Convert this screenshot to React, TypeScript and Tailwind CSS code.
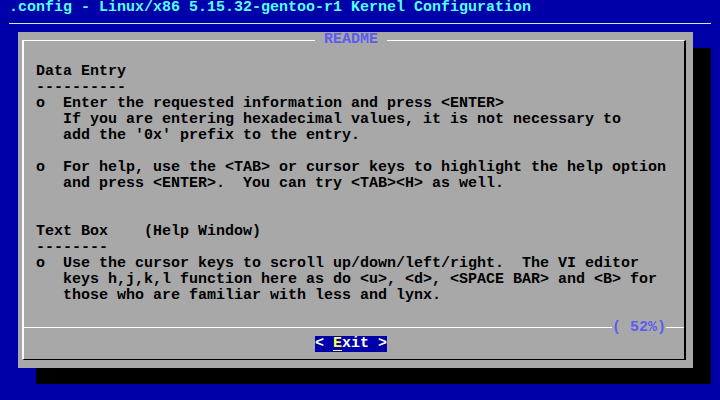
import React from "react";

const readmeLines = [
  "",
  "Data Entry",
  "----------",
  "o  Enter the requested information and press <ENTER>",
  "   If you are entering hexadecimal values, it is not necessary to",
  "   add the '0x' prefix to the entry.",
  "",
  "o  For help, use the <TAB> or cursor keys to highlight the help option",
  "   and press <ENTER>.  You can try <TAB><H> as well.",
  "",
  "",
  "Text Box    (Help Window)",
  "--------",
  "o  Use the cursor keys to scroll up/down/left/right.  The VI editor",
  "   keys h,j,k,l function here as do <u>, <d>, <SPACE BAR> and <B> for",
  "   those who are familiar with less and lynx.",
  "",
];

const App = () => {
  return (
    <div className="w-[720px] h-[400px] overflow-hidden bg-[#0000a8] font-['Liberation_Mono',monospace] text-[15px] leading-4 font-bold">
      {/* backtitle */}
      <div className="h-4 pl-[9px] text-[#55ffff] whitespace-pre">
        .config - Linux/x86 5.15.32-gentoo-r1 Kernel Configuration
      </div>
      <div className="h-4 pt-[7px]">
        <div className="ml-[9px] w-[702px] h-px bg-[#b8f4ff]"></div>
      </div>

      {/* dialog */}
      <div className="ml-[18px] w-[675px] h-[336px] bg-[#a8a8a8] shadow-[18px_16px_0_0_#000] pt-2 pl-1">
        <div className="relative w-[664px] h-[320px] border-t border-l-2 border-r-2 border-b border-t-white border-l-white border-r-black border-b-black flex flex-col">
          <div className="absolute -top-[9px] left-[291px] bg-[#a8a8a8] text-[#5c5cf0] whitespace-pre">
            {" README "}
          </div>

          <div className="pt-[7px] pl-3 text-black">
            {readmeLines.map((line, i) => (
              <div key={i} className="h-4 whitespace-pre">
                {line}
              </div>
            ))}
          </div>

          {/* separator with percent */}
          <div className="h-4 flex items-start">
            <div className="flex-1 h-px mt-[7px] bg-white"></div>
            <span className="text-[#5c5cf0] whitespace-pre">( 52%)</span>
            <div className="w-[18px] h-px mt-[7px] bg-white"></div>
          </div>

          <div className="h-4 flex">
            <span className="ml-[291px] bg-[#0000a8] text-white whitespace-pre">
              {"< "}
              <span className="text-[#ffff55] underline underline-offset-[3px]">E</span>
              {"xit >"}
            </span>
          </div>
        </div>
      </div>
    </div>
  );
};

export default App;
